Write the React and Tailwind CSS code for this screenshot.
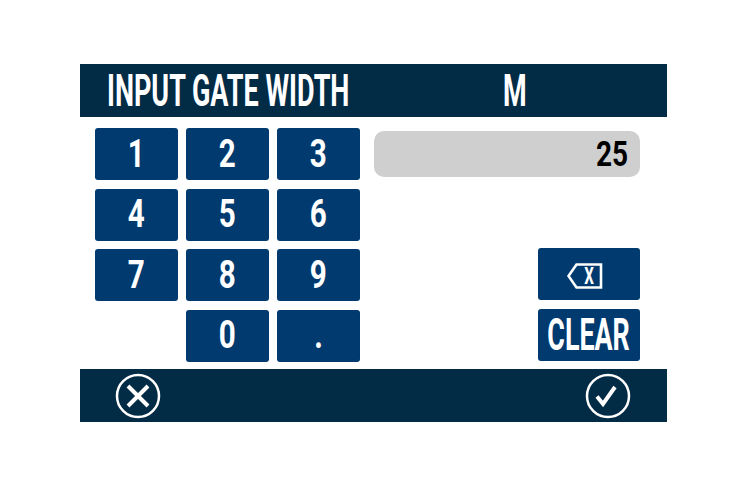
import React from "react";

const FONT = "font-['Roboto',sans-serif] font-bold";

function Key({ label }) {
  return (
    <div className="flex h-[52px] w-[83px] items-center justify-center rounded-[3px] bg-[#013a6e] text-white">
      <span className={`${FONT} inline-block origin-center scale-x-[0.76] text-[39px] leading-none`}>{label}</span>
    </div>
  );
}

function BackspaceIcon() {
  return (
    <svg width="36" height="26" viewBox="0 0 36 26" fill="none">
      <path d="M1.5 13 L9.5 1.5 H34 V24.5 H9.5 Z" stroke="white" strokeWidth="2.6" strokeLinejoin="miter" />
      <text
        x="22"
        y="21"
        fill="white"
        fontSize="23"
        fontWeight="700"
        fontFamily="Roboto, sans-serif"
        textAnchor="middle"
        transform="translate(22 0) scale(0.66 1) translate(-22 0)"
      >
        X
      </text>
    </svg>
  );
}

function CancelIcon() {
  return (
    <svg width="46" height="46" viewBox="0 0 46 46" fill="none">
      <circle cx="23" cy="23" r="21" stroke="white" strokeWidth="2.5" />
      <path d="M13 13 L33 33 M33 13 L13 33" stroke="white" strokeWidth="4" strokeLinecap="butt" />
    </svg>
  );
}

function OkIcon() {
  return (
    <svg width="46" height="46" viewBox="0 0 46 46" fill="none">
      <circle cx="23" cy="23" r="21" stroke="white" strokeWidth="2.5" />
      <path d="M12 23.5 L18 31 L30 14" stroke="white" strokeWidth="4" strokeLinejoin="miter" strokeLinecap="butt" />
    </svg>
  );
}

export default function App() {
  return (
    <div className="min-h-[491px] w-[750px] bg-white pt-[64px]">
      <div className="ml-[80px] w-[587px]">
        {/* Header */}
        <div className="flex h-[53px] items-center bg-[#022b45] pl-[27px] text-white">
          <div className="w-[396px] shrink-0">
            <span className={`${FONT} inline-block origin-left scale-x-[0.6] whitespace-nowrap text-[45px] leading-none`}>
              INPUT GATE WIDTH
            </span>
          </div>
          <div>
            <span className={`${FONT} inline-block origin-left scale-x-[0.6] text-[45px] leading-none`}>M</span>
          </div>
        </div>

        {/* Body */}
        <div className="flex h-[252px] pl-[15px] pt-[11px]">
          <div className="grid grid-cols-[83px_83px_83px] grid-rows-[52px_52px_52px_52px] gap-x-[8px] gap-y-[8.5px]">
            <Key label="1" />
            <Key label="2" />
            <Key label="3" />
            <Key label="4" />
            <Key label="5" />
            <Key label="6" />
            <Key label="7" />
            <Key label="8" />
            <Key label="9" />
            <div />
            <Key label="0" />
            <Key label="." />
          </div>

          <div className="ml-[14px] flex w-[266px] flex-col items-end">
            <div className="mt-[3px] flex h-[46px] w-[266px] items-center justify-end rounded-[10px] bg-[#cfcfcf] pr-[12px]">
              <span className={`${FONT} inline-block origin-right scale-x-[0.8] text-[35px] leading-none text-black`}>25</span>
            </div>
            <div className="mt-[71px] flex h-[52px] w-[102px] items-center justify-center rounded-[3px] bg-[#013a6e]">
              <div className="-ml-[9px] mt-[3px]">
                <BackspaceIcon />
              </div>
            </div>
            <div className="mt-[8.5px] flex h-[52px] w-[102px] items-center justify-center rounded-[3px] bg-[#013a6e] text-white">
              <span className={`${FONT} inline-block origin-center scale-x-[0.61] text-[44px] leading-none`}>CLEAR</span>
            </div>
          </div>
        </div>

        {/* Footer */}
        <div className="flex h-[53px] items-center justify-between bg-[#022b45] pl-[35px] pr-[36px]">
          <CancelIcon />
          <OkIcon />
        </div>
      </div>
    </div>
  );
}
